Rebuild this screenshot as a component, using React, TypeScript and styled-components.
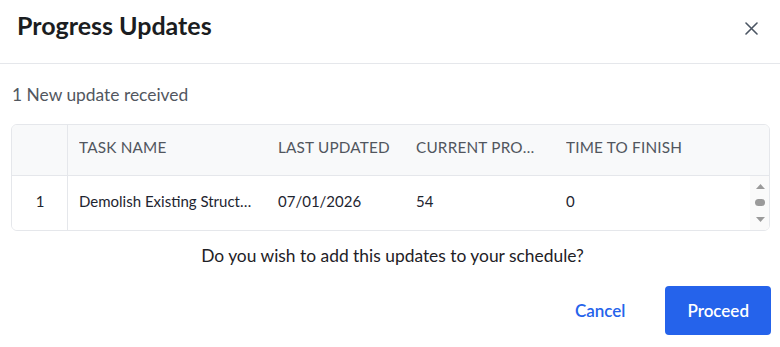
import styled, { createGlobalStyle } from 'styled-components'

const GlobalStyle = createGlobalStyle`
  body {
    margin: 0;
    background: #ffffff;
    font-family: Lato, "Open Sans", sans-serif;
  }
  * {
    box-sizing: border-box;
  }
`

const Dialog = styled.div`
  width: 780px;
  height: 347px;
  background: #ffffff;
  display: flex;
  flex-direction: column;
`

const Header = styled.div`
  height: 64px;
  display: flex;
  justify-content: space-between;
  align-items: flex-start;
  padding: 10px 19px 0 17px;
  border-bottom: 1px solid #e5e7eb;
`

const Title = styled.h2`
  margin: 0;
  font-size: 25px;
  line-height: 1.2;
  font-weight: 700;
  color: #1b1d21;
`

const CloseButton = styled.button`
  margin-top: 8px;
  width: 20px;
  height: 20px;
  padding: 0;
  border: none;
  background: none;
  display: flex;
  align-items: center;
  justify-content: center;
  color: #4b5563;
  cursor: pointer;
`

const Body = styled.div`
  padding: 21px 10px 0 11px;
  display: flex;
  flex-direction: column;
`

const Subtitle = styled.div`
  font-size: 17.4px;
  line-height: 1.2;
  color: #52575f;
  margin-left: 1px;
  margin-bottom: 18px;
`

const Table = styled.div`
  border: 1px solid #e5e7eb;
  border-radius: 6px;
  overflow: hidden;
`

const Row = styled.div<{ $head?: boolean }>`
  display: grid;
  grid-template-columns: 56px 199px 138px 150px 1fr ${(p) => (p.$head ? '' : '19px')};
  height: ${(p) => (p.$head ? '51px' : '54px')};
  background: ${(p) => (p.$head ? '#f8f9fa' : '#ffffff')};
  border-bottom: ${(p) => (p.$head ? '1px solid #e5e7eb' : 'none')};
`

const Cell = styled.div<{ $head?: boolean; $index?: boolean }>`
  display: flex;
  align-items: center;
  justify-content: ${(p) => (p.$index ? 'center' : 'flex-start')};
  padding: 0 ${(p) => (p.$index ? '0' : '12px')} ${(p) => (p.$head ? '5px' : '4px')}
    ${(p) => (p.$index ? '1px' : '11px')};
  border-right: ${(p) => (p.$index ? '1px solid #e5e7eb' : 'none')};
  font-size: ${(p) => (p.$head ? '15.3px' : '15px')};
  text-transform: ${(p) => (p.$head ? 'uppercase' : 'none')};
  letter-spacing: ${(p) => (p.$head ? '0.2px' : '0')};
  color: ${(p) => (p.$head ? '#51565e' : '#1e2530')};
  white-space: nowrap;
  overflow: hidden;
  min-width: 0;
`

const CellText = styled.span`
  overflow: hidden;
  text-overflow: ellipsis;
  white-space: nowrap;
`

const Scrollbar = styled.div`
  background: #fafafa;
  display: flex;
  flex-direction: column;
  align-items: center;
  justify-content: space-between;
  padding: 8px 0 8px 1px;
`

const Thumb = styled.div`
  width: 10px;
  height: 7px;
  border-radius: 4px;
  background: #9a9a9a;
`

const Question = styled.div`
  margin-top: 15px;
  text-align: center;
  font-size: 17.4px;
  line-height: 1.2;
  color: #1e2126;
  padding-left: 4px;
`

const Footer = styled.div`
  margin-top: 19px;
  display: flex;
  justify-content: flex-end;
  align-items: center;
  gap: 19px;
  padding-right: 9px;
`

const Button = styled.button<{ $primary?: boolean }>`
  height: 49px;
  padding: 0 ${(p) => (p.$primary ? '22px' : '21px')};
  border: none;
  border-radius: 4px;
  font-family: Lato, "Open Sans", sans-serif;
  font-size: 17px;
  font-weight: 600;
  background: ${(p) => (p.$primary ? '#2563eb' : 'transparent')};
  color: ${(p) => (p.$primary ? '#ffffff' : '#2563eb')};
  cursor: pointer;
`

const columns = ['Task Name', 'Last Updated', 'Current Progress', 'Time to Finish']

const updates = [
  { id: 1, task: 'Demolish Existing Structures', updated: '07/01/2026', progress: '54', finish: '0' },
]

export default function App() {
  return (
    <>
      <GlobalStyle />
      <Dialog>
        <Header>
          <Title>Progress Updates</Title>
          <CloseButton aria-label="Close">
            <svg width="13" height="13" viewBox="0 0 13 13">
              <path d="M1 1L12 12M12 1L1 12" stroke="currentColor" strokeWidth="1.6" strokeLinecap="round" />
            </svg>
          </CloseButton>
        </Header>

        <Body>
          <Subtitle>1 New update received</Subtitle>

          <Table>
            <Row $head>
              <Cell $head $index />
              {columns.map((c) => (
                <Cell $head key={c}>
                  <CellText>{c}</CellText>
                </Cell>
              ))}
            </Row>
            {updates.map((u) => (
              <Row key={u.id}>
                <Cell $index>{u.id}</Cell>
                <Cell>
                  <CellText>{u.task}</CellText>
                </Cell>
                <Cell>{u.updated}</Cell>
                <Cell>{u.progress}</Cell>
                <Cell>{u.finish}</Cell>
                <Scrollbar>
                  <svg width="9" height="5" viewBox="0 0 9 5">
                    <path d="M4.5 0L9 5H0Z" fill="#9a9a9a" />
                  </svg>
                  <Thumb />
                  <svg width="9" height="5" viewBox="0 0 9 5">
                    <path d="M0 0H9L4.5 5Z" fill="#9a9a9a" />
                  </svg>
                </Scrollbar>
              </Row>
            ))}
          </Table>

          <Question>Do you wish to add this updates to your schedule?</Question>
        </Body>

        <Footer>
          <Button>Cancel</Button>
          <Button $primary>Proceed</Button>
        </Footer>
      </Dialog>
    </>
  )
}
